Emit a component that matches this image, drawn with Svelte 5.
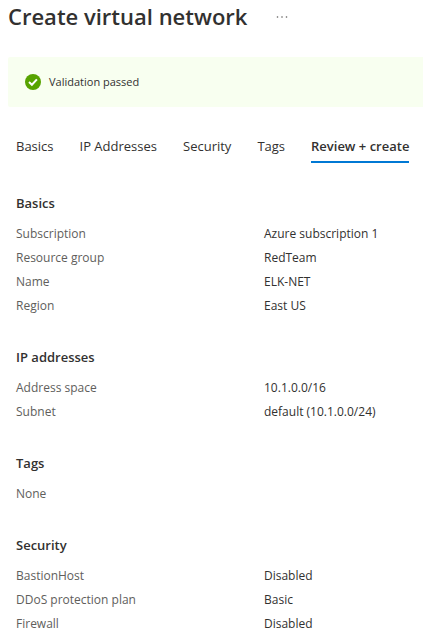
<script>
  const tabs = ['Basics', 'IP Addresses', 'Security', 'Tags', 'Review + create'];
  let active = $state('Review + create');

  const sections = [
    {
      title: 'Basics',
      rows: [
        ['Subscription', 'Azure subscription 1'],
        ['Resource group', 'RedTeam'],
        ['Name', 'ELK-NET'],
        ['Region', 'East US']
      ]
    },
    {
      title: 'IP addresses',
      rows: [
        ['Address space', '10.1.0.0/16'],
        ['Subnet', 'default (10.1.0.0/24)']
      ]
    },
    { title: 'Tags', empty: 'None' },
    {
      title: 'Security',
      rows: [
        ['BastionHost', 'Disabled'],
        ['DDoS protection plan', 'Basic'],
        ['Firewall', 'Disabled']
      ]
    }
  ];
</script>

<main>
  <header>
    <h1>Create virtual network</h1>
    <button class="more" type="button" aria-label="More actions">
      <svg width="12" height="4" viewBox="0 0 12 4" aria-hidden="true">
        <circle cx="1.5" cy="2" r="0.8" />
        <circle cx="6" cy="2" r="0.8" />
        <circle cx="10.5" cy="2" r="0.8" />
      </svg>
    </button>
  </header>

  <div class="banner" role="status">
    <svg width="16" height="16" viewBox="0 0 16 16" aria-hidden="true">
      <circle cx="8" cy="8" r="8" fill="#57a300" />
      <path d="M4 8.1 6.9 10.8 11.9 5.4" fill="none" stroke="#fff" stroke-width="2" />
    </svg>
    <span>Validation passed</span>
  </div>

  <div class="tabs" role="tablist">
    {#each tabs as tab}
      <button
        type="button"
        role="tab"
        class:active={active === tab}
        aria-selected={active === tab}
        onclick={() => (active = tab)}>{tab}</button>
    {/each}
  </div>

  <div class="summary">
    {#each sections as section}
      <section>
        <h2>{section.title}</h2>
        {#if section.rows}
          <dl>
            {#each section.rows as [label, value]}
              <dt>{label}</dt>
              <dd>{value}</dd>
            {/each}
          </dl>
        {:else}
          <p>{section.empty}</p>
        {/if}
      </section>
    {/each}
  </div>
</main>

<style>
  :global(body) {
    background: #fff;
  }
  main {
    font-family: 'Segoe UI', 'Open Sans', 'Noto Sans', sans-serif;
    font-size: 12px;
    line-height: 24px;
    color: #323130;
  }
  header {
    display: flex;
    align-items: center;
    gap: 23px;
    padding-left: 8px;
    height: 33px;
  }
  h1 {
    margin: 0;
    font-size: 22px;
    font-weight: 600;
    line-height: 33px;
    white-space: nowrap;
  }
  button {
    border: 0;
    padding: 0;
    background: none;
    font: inherit;
    color: inherit;
    cursor: pointer;
  }
  .more {
    display: flex;
    align-items: center;
    justify-content: center;
    width: 24px;
    height: 24px;
  }
  .more svg {
    fill: #605e5c;
  }
  .banner {
    display: flex;
    align-items: center;
    gap: 8px;
    margin: 24px 0 0 8px;
    padding: 13px 17px;
    border-radius: 2px 0 0 2px;
    background: #f8fff0;
  }
  .banner span {
    font-size: 11px;
  }
  .tabs {
    display: flex;
    gap: 26px;
    padding: 27px 12px 0 16px;
    font-size: 13px;
  }
  .tabs button {
    padding-bottom: 3px;
    border-bottom: 2px solid transparent;
    white-space: nowrap;
  }
  .tabs .active {
    border-color: #0078d4;
    font-weight: 600;
  }
  .summary {
    padding: 28px 16px 8px;
  }
  section + section {
    margin-top: 27px;
  }
  h2 {
    margin: 0 0 7px;
    font-size: 13px;
    font-weight: 600;
    line-height: 24px;
  }
  dl {
    display: grid;
    grid-template-columns: 248px 1fr;
    margin: 0;
  }
  dt,
  p {
    margin: 0;
    color: #605e5c;
  }
  dd {
    margin: 0;
  }
</style>
